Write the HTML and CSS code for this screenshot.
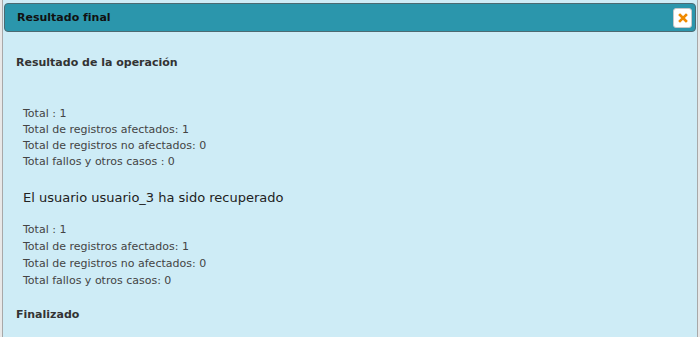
FILE: index.html
```html
<!DOCTYPE html>
<html lang="es">
<head>
<meta charset="utf-8">
<title>Resultado final</title>
<link rel="stylesheet" href="styles.css">
</head>
<body>
<div class="dialog">
  <div class="titlebar">
    <span class="title">Resultado final</span>
    <button class="close" type="button" aria-label="Cerrar">
      <svg width="10" height="10" viewBox="0 0 10 10"><path d="M2 2L8 8M8 2L2 8" stroke="#f08a00" stroke-width="2.6" stroke-linecap="square"/></svg>
    </button>
  </div>
  <div class="content">
    <h3 class="heading">Resultado de la operación</h3>
    <div class="stats first">
      <div>Total : 1</div>
      <div>Total de registros afectados: 1</div>
      <div>Total de registros no afectados: 0</div>
      <div>Total fallos y otros casos : 0</div>
    </div>
    <p class="message">El usuario usuario_3 ha sido recuperado</p>
    <div class="stats second">
      <div>Total : 1</div>
      <div>Total de registros afectados: 1</div>
      <div>Total de registros no afectados: 0</div>
      <div>Total fallos y otros casos: 0</div>
    </div>
    <h3 class="heading final">Finalizado</h3>
  </div>
</div>
</body>
</html>
```
FILE: styles.css
```css
html, body {
  margin: 0;
  padding: 0;
  height: 100%;
  background: #e8e8e8;
  font-family: "DejaVu Sans", Verdana, sans-serif;
}
body {
  padding: 0 2px 0 2px;
  box-sizing: border-box;
}
.dialog {
  height: 100%;
  box-sizing: border-box;
  background: #ceecf6;
  border-left: 1px solid #a8a8a8;
  border-right: 1px solid #a8a8a8;
  padding: 3px 1px 0 1px;
}
.titlebar {
  display: flex;
  align-items: center;
  justify-content: space-between;
  height: 29px;
  box-sizing: border-box;
  background: #2b96ac;
  border: 1px solid #4c6a72;
  border-radius: 4px;
  padding: 0 3px 0 12px;
}
.title {
  font-size: 11px;
  font-weight: bold;
  color: #111;
}
.close {
  width: 19px;
  height: 20px;
  padding: 0;
  display: flex;
  align-items: center;
  justify-content: center;
  background: #fff;
  border: 1px solid #c8c8c8;
  border-radius: 3px;
}
.content {
  padding: 0 0 0 12px;
  color: #444;
}
.heading {
  margin: 0;
  font-size: 11px;
  font-weight: bold;
  color: #333;
}
.content > .heading:first-child {
  padding-top: 24px;
}
.stats {
  padding-left: 7px;
  font-size: 11px;
  line-height: 16px;
}
.stats.first {
  margin-top: 37px;
}
.message {
  margin: 20px 0 0 7px;
  font-size: 13px;
  color: #222;
}
.stats.second {
  margin-top: 16px;
  line-height: 17px;
}
.final {
  margin-top: 19px;
}
```
